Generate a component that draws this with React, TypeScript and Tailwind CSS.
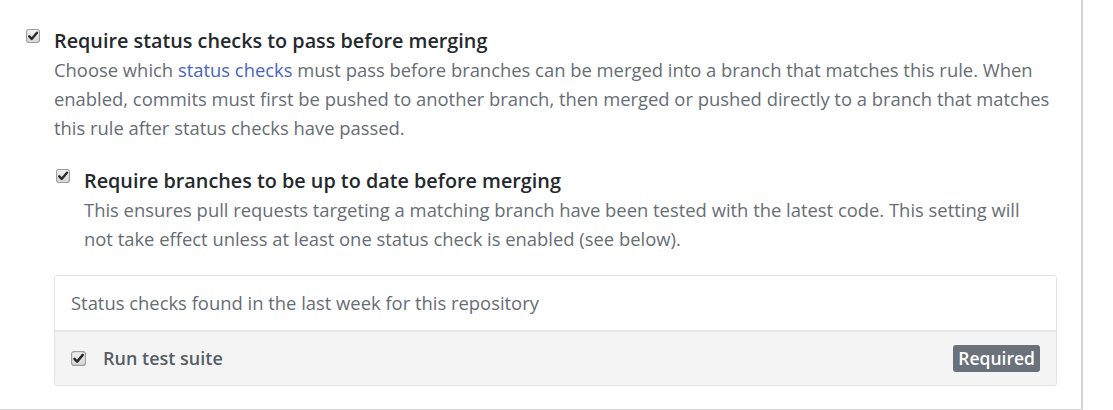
import type { ReactNode } from 'react';

function CheckMark({ size = 13 }: { size?: number }) {
  return (
    <svg width={size} height={size} viewBox="0 0 13 13" className="shrink-0">
      <defs>
        <linearGradient id="cbg" x1="0" y1="0" x2="0" y2="1">
          <stop offset="0" stopColor="#f2f2f2" />
          <stop offset="1" stopColor="#d6d6d6" />
        </linearGradient>
      </defs>
      <rect x="0.5" y="0.5" width="12" height="12" rx="2.2" fill="url(#cbg)" stroke="#9e9e9e" />
      <path d="M3 6.8 L5.3 9.2 L10.2 3.4" fill="none" stroke="#2b2b2b" strokeWidth="2.2" strokeLinecap="round" strokeLinejoin="round" />
    </svg>
  );
}

function Option({ title, children }: { title: string; children: ReactNode }) {
  return (
    <div className="flex items-start">
      <div className="w-[28px] pt-[3px] shrink-0">
        <CheckMark size={14} />
      </div>
      <div className="flex-1">
        <div className="text-[19.8px] font-semibold text-[#24292e] leading-[29px]">{title}</div>
        <p className="text-[18.4px] text-[#666d75] leading-[29px]">{children}</p>
      </div>
    </div>
  );
}

export default function App() {
  return (
    <div
      className="w-[1083px] h-[410px] bg-white border-r-2 border-b border-[#d5d5d5] pl-[26px] pr-[28px] pt-[26px]"
      style={{ fontFamily: '"Open Sans", "Noto Sans", sans-serif' }}
    >
      <Option title="Require status checks to pass before merging">
        Choose which <span className="text-[#4763c8]">status checks</span> must pass before branches can be merged
        into a branch that matches this rule. When enabled, commits must first be pushed to another branch, then
        merged or pushed directly to a branch that matches this rule after status checks have passed.
      </Option>

      <div className="pl-[30px] mt-[24px]">
        <Option title="Require branches to be up to date before merging">
          This ensures pull requests targeting a matching branch have been tested with the latest code. This setting
          will not take effect unless at least one status check is enabled (see below).
        </Option>

        <div className="ml-[-2px] mr-[-4px] mt-[22px] border border-[#e3e3e3] rounded-[3px] overflow-hidden">
          <div className="h-[56px] px-[16px] flex items-center bg-white border-b-2 border-[#e8e8e8] text-[18.4px] text-[#666d75]">
            Status checks found in the last week for this repository
          </div>
          <div className="h-[53px] pl-[16px] pr-[16px] flex items-center bg-[#f4f4f4]">
            <CheckMark size={15} />
            <span className="ml-[17px] text-[18px] font-semibold text-[#565d66]">Run test suite</span>
            <span className="ml-auto h-[27px] px-[5px] flex items-center rounded-[3px] bg-[#6a717b] text-white text-[17.5px] font-semibold">
              Required
            </span>
          </div>
        </div>
      </div>
    </div>
  );
}
